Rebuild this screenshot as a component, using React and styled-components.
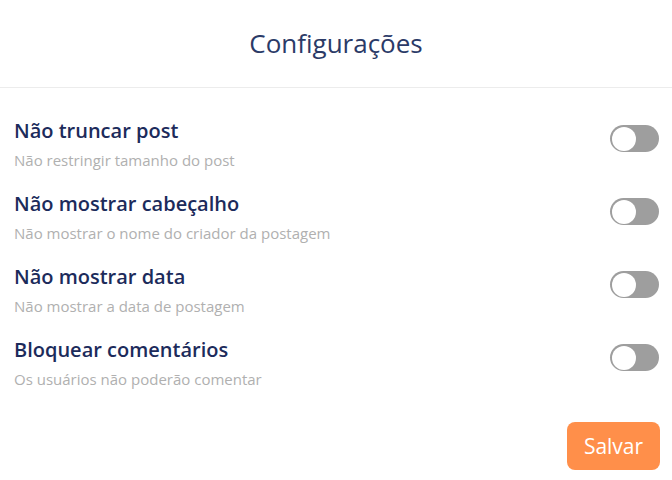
import React, { useState } from "react";
import styled, { createGlobalStyle } from "styled-components";

const Global = createGlobalStyle`
  html, body { margin: 0; padding: 0; background: #fff; }
  body { font-family: "Open Sans", "Noto Sans", sans-serif; }
`;

const Page = styled.div`
  width: 672px;
  height: 480px;
  display: flex;
  flex-direction: column;
  background: #fff;
`;

const Header = styled.div`
  height: 88px;
  box-sizing: border-box;
  border-bottom: 1px solid #ececec;
  display: flex;
  align-items: center;
  justify-content: center;
`;

const Title = styled.h1`
  margin: 0;
  font-size: 26px;
  font-weight: 400;
  color: #2b3a67;
  padding-bottom: 2px;
`;

const List = styled.div`
  display: flex;
  flex-direction: column;
  padding: 30px 12px 0 14px;
  gap: 20px;
`;

const Row = styled.div`
  display: flex;
  align-items: center;
  justify-content: space-between;
`;

const Texts = styled.div`
  display: flex;
  flex-direction: column;
  gap: 6px;
`;

const Label = styled.div`
  font-size: 20px;
  font-weight: 600;
  color: #1c2b5b;
  line-height: 26px;
`;

const Hint = styled.div`
  font-size: 15px;
  color: #b0b0b0;
  line-height: 21px;
`;

const Switch = styled.button`
  width: 49px;
  height: 27px;
  border-radius: 14px;
  border: none;
  padding: 0;
  margin-right: 1px;
  background: ${(p) => (p.on ? "#ff8f4a" : "#9e9e9e")};
  position: relative;
  cursor: pointer;
  margin-top: -12px;
  &::after {
    content: "";
    position: absolute;
    top: 1.5px;
    left: ${(p) => (p.on ? "23.5px" : "1.5px")};
    width: 24px;
    height: 24px;
    border-radius: 50%;
    background: #fff;
  }
`;

const Footer = styled.div`
  display: flex;
  justify-content: flex-end;
  padding: 32px 12px 0 0;
`;

const SaveButton = styled.button`
  width: 93px;
  height: 48px;
  border: none;
  border-radius: 8px;
  background: #ff8f4a;
  color: #fff;
  font-family: "Open Sans", "Noto Sans", sans-serif;
  font-size: 21px;
  cursor: pointer;
`;

const items = [
  ["Não truncar post", "Não restringir tamanho do post"],
  ["Não mostrar cabeçalho", "Não mostrar o nome do criador da postagem"],
  ["Não mostrar data", "Não mostrar a data de postagem"],
  ["Bloquear comentários", "Os usuários não poderão comentar"],
];

export default function App() {
  const [state, setState] = useState([false, false, false, false]);
  return (
    <Page>
      <Global />
      <Header>
        <Title>Configurações</Title>
      </Header>
      <List>
        {items.map(([l, h], i) => (
          <Row key={l}>
            <Texts>
              <Label>{l}</Label>
              <Hint>{h}</Hint>
            </Texts>
            <Switch
              on={state[i] ? 1 : 0}
              onClick={() => setState((s) => s.map((v, j) => (j === i ? !v : v)))}
            />
          </Row>
        ))}
      </List>
      <Footer>
        <SaveButton>Salvar</SaveButton>
      </Footer>
    </Page>
  );
}
